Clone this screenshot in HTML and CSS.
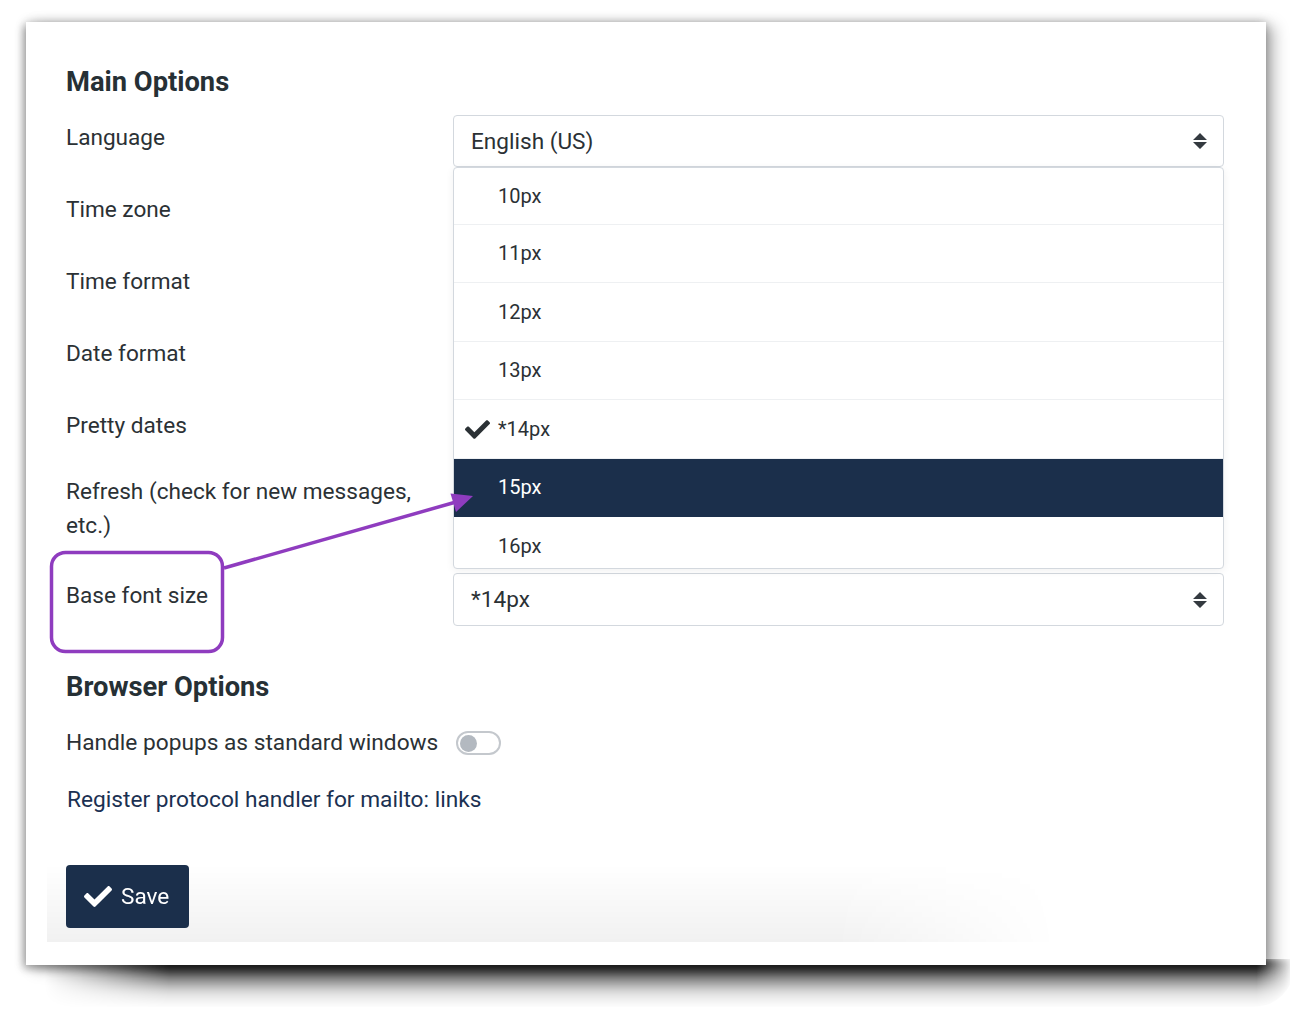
FILE: index.html
```html
<!DOCTYPE html>
<html lang="en">
<head>
<meta charset="utf-8">
<title>Settings</title>
<link rel="stylesheet" href="styles.css">
</head>
<body>
<div class="page">
<div class="window">
  <h2 class="heading first">Main Options</h2>
  <div class="form">
    <div class="row r72">
      <div class="label">Language</div>
      <div class="control">
        <div class="select">
          <span>English (US)</span>
          <svg class="arrows" viewBox="0 0 14 16" width="14" height="16"><path d="M7 0 L14 7 H0 Z M0 9 H14 L7 16 Z" fill="#343a40"/></svg>
        </div>
        <ul class="dropdown">
          <li class="first-item">10px</li>
          <li>11px</li>
          <li>12px</li>
          <li>13px</li>
          <li class="checked"><svg class="check" viewBox="0 64 512 384" width="25" height="19"><path fill="#2b3135" d="M173.898 439.404l-166.4-166.4c-9.997-9.997-9.997-26.206 0-36.204l36.203-36.204c9.997-9.998 26.207-9.998 36.204 0L192 312.69 432.095 72.596c9.997-9.997 26.207-9.997 36.204 0l36.203 36.204c9.997 9.997 9.997 26.206 0 36.204l-294.4 294.401c-9.998 9.997-26.207 9.997-36.204-.001z"/></svg>*14px</li>
          <li class="active">15px</li>
          <li class="last">16px</li>
        </ul>
      </div>
    </div>
    <div class="row r72"><div class="label">Time zone</div><div class="control"></div></div>
    <div class="row r72"><div class="label">Time format</div><div class="control"></div></div>
    <div class="row r72"><div class="label">Date format</div><div class="control"></div></div>
    <div class="row r66"><div class="label">Pretty dates</div><div class="control"></div></div>
    <div class="row r104"><div class="label">Refresh (check for new messages, etc.)</div><div class="control"></div></div>
    <div class="row r53">
      <div class="label">Base font size</div>
      <div class="control">
        <div class="select tall">
          <span>*14px</span>
          <svg class="arrows" viewBox="0 0 14 16" width="14" height="16"><path d="M7 0 L14 7 H0 Z M0 9 H14 L7 16 Z" fill="#343a40"/></svg>
        </div>
      </div>
    </div>
  </div>

  <h2 class="heading second">Browser Options</h2>
  <div class="toggle-row">
    <span>Handle popups as standard windows</span>
    <span class="toggle"><span class="knob"></span></span>
  </div>
  <a class="link" href="#">Register protocol handler for mailto: links</a>

  <div class="footer">
    <button class="save" type="button"><svg viewBox="0 64 512 384" width="28" height="21"><path fill="#ffffff" d="M173.898 439.404l-166.4-166.4c-9.997-9.997-9.997-26.206 0-36.204l36.203-36.204c9.997-9.998 26.207-9.998 36.204 0L192 312.69 432.095 72.596c9.997-9.997 26.207-9.997 36.204 0l36.203 36.204c9.997 9.997 9.997 26.206 0 36.204l-294.4 294.401c-9.998 9.997-26.207 9.997-36.204-.001z"/></svg><span>Save</span></button>
  </div>

  <svg class="annotation" viewBox="0 0 1240 943" width="1240" height="943">
    <rect x="25.5" y="530.5" width="171" height="99" rx="14" ry="14" fill="none" stroke="#8f3cbf" stroke-width="3.5"/>
    <line x1="198" y1="546" x2="430" y2="480" stroke="#8f3cbf" stroke-width="3.5"/>
    <polygon points="447,474 424.5,471.5 430,490" fill="#8f3cbf"/>
  </svg>
</div>
<div class="bottom-shadow"></div>
</div>
</body>
</html>
```
FILE: styles.css
```css
* { box-sizing: border-box; }

html, body {
  margin: 0;
  padding: 0;
  background: #ffffff;
}

body {
  font-family: Roboto, "Noto Sans", "Liberation Sans", sans-serif;
  color: #2b3135;
}

.page {
  width: 1290px;
  height: 1024px;
  padding: 22px 0 0 26px;
  overflow: hidden;
}

.window {
  position: relative;
  z-index: 1;
  width: 1240px;
  height: 943px;
  background: #ffffff;
  padding: 43px 42px 0 40px;
  box-shadow:
    0 0 10px rgba(0, 0, 0, 0.22),
    8px 4px 14px rgba(0, 0, 0, 0.28),
    -3px 4px 8px rgba(0, 0, 0, 0.25);
}

.bottom-shadow {
  width: 1250px;
  height: 48px;
  margin-top: -6px;
  margin-left: 18px;
  border-radius: 0 0 40px 30px / 0 0 40px 20px;
  background: linear-gradient(to bottom, rgba(0,0,0,0.9) 0%, rgba(0,0,0,0.8) 18%, rgba(0,0,0,0.45) 42%, rgba(0,0,0,0.12) 70%, rgba(0,0,0,0) 100%);
  -webkit-mask-image: linear-gradient(to right, transparent 0%, #000 10%, #000 97%, transparent 100%);
  mask-image: linear-gradient(to right, transparent 0%, #000 10%, #000 97%, transparent 100%);
  filter: blur(3px);
}

.heading {
  margin: 0;
  font-size: 27.3px;
  line-height: 34px;
  font-weight: 700;
  color: #263035;
}

.heading.first { margin-bottom: 16px; }
.heading.second { margin-top: 44px; margin-bottom: 22px; }

.form {
  display: flex;
  flex-direction: column;
}

.row {
  display: grid;
  grid-template-columns: 387px 771px;
}

.r72 { height: 72px; }
.r66 { height: 66px; }
.r104 { height: 104px; }
.r53 { height: 53px; }

.label {
  font-size: 22.6px;
  line-height: 34px;
  padding-top: 6px;
  padding-right: 30px;
}

.control {
  position: relative;
}

.select {
  height: 52px;
  border: 1px solid #d3d8de;
  border-radius: 4px;
  background: #fff;
  display: flex;
  align-items: center;
  justify-content: space-between;
  padding: 0 16px 0 17px;
  font-size: 22.6px;
}

.select.tall { height: 53px; }

.arrows { display: block; }

.dropdown {
  position: absolute;
  top: 52px;
  left: 0;
  width: 771px;
  height: 402px;
  margin: 0;
  padding: 0;
  list-style: none;
  background: #fff;
  border: 1px solid #d3d8de;
  border-radius: 4px;
  box-shadow: 0 2px 8px rgba(0, 0, 0, 0.06);
  overflow: hidden;
  z-index: 2;
}

.dropdown li {
  position: relative;
  height: 58.5px;
  flex-shrink: 0;
  display: flex;
  align-items: center;
  padding-left: 44px;
  font-size: 20px;
  border-bottom: 1px solid #eef0f2;
  color: #2b3135;
}

.dropdown li.first-item { height: 56.5px; }
.dropdown li.last { border-bottom: none; }

.dropdown li.active {
  background: #1b2f4b;
  color: #ffffff;
  border-bottom-color: #1b2f4b;
}

.check {
  position: absolute;
  left: 11px;
  top: 20px;
}

.toggle-row {
  display: flex;
  align-items: center;
  gap: 18px;
  font-size: 22.7px;
  line-height: 34px;
}

.toggle {
  width: 45px;
  height: 24px;
  border: 2px solid #c4c8cd;
  border-radius: 12px;
  display: flex;
  align-items: center;
  padding-left: 2px;
}

.knob {
  width: 17px;
  height: 17px;
  border-radius: 50%;
  background: #b3b9c0;
}

.link {
  display: block;
  margin-top: 23px;
  margin-left: 1px;
  font-size: 22.7px;
  line-height: 34px;
  color: #1b3152;
  text-decoration: none;
}

.footer {
  margin-top: 28px;
  margin-left: -19px;
  width: 1010px;
  padding: 20px 19px 14px;
  background: linear-gradient(to bottom, rgba(0,0,0,0) 20%, rgba(0,0,0,0.055));
  -webkit-mask-image: linear-gradient(to right, #000 78%, transparent 100%);
  mask-image: linear-gradient(to right, #000 78%, transparent 100%);
}

.save {
  display: flex;
  align-items: center;
  gap: 9px;
  height: 63px;
  width: 123px;
  padding: 0 0 0 18px;
  border: none;
  border-radius: 4px;
  background: #1b2f4b;
  color: #fff;
  font-family: Roboto, "Noto Sans", sans-serif;
  font-size: 22.6px;
}

.save svg { display: block; }

.annotation {
  position: absolute;
  left: 0;
  top: 0;
  pointer-events: none;
  z-index: 5;
}
```
